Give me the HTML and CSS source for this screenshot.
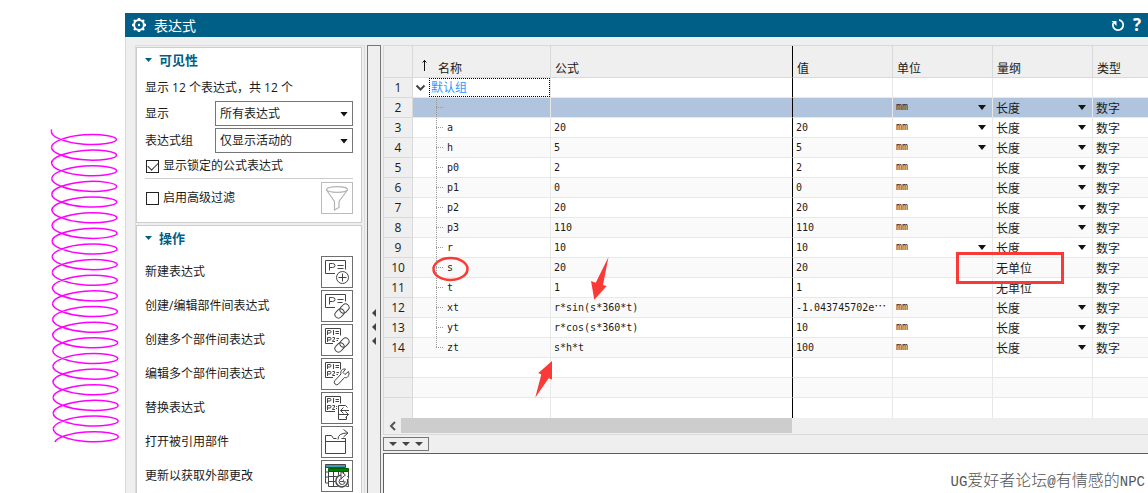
FILE: index.html
```html
<!DOCTYPE html>
<html lang="zh-CN">
<head>
<meta charset="utf-8">
<title>表达式</title>
<link rel="stylesheet" href="styles.css">
</head>
<body>
<div class="workspace">
  <div class="viewport">
    <svg class="helix" width="125" height="493" viewBox="0 0 125 493" aria-hidden="true">
      <defs>
        <path id="turn" d="M0 0c0 5.8 15.5 11.2 32.5 12.5c17 1.3 32.5-1.5 32.5-4.7c0-3.2-15.5-6-32.5-4.7c-17 1.3-32.4 6.7-32.4 12.54"/>
        <g id="turns">
          <use href="#turn"/>
          <use href="#turn" x="0.1" y="15.64"/>
          <use href="#turn" x="0.2" y="31.28"/>
          <use href="#turn" x="0.3" y="46.92"/>
          <use href="#turn" x="0.4" y="62.56"/>
        </g>
      </defs>
      <path d="M51.5 129.5l-.1 2.2"/>
      <use href="#turns" x="51.4" y="131.7"/>
      <use href="#turns" x="51.9" y="209.9"/>
      <use href="#turns" x="52.4" y="288.1"/>
      <use href="#turn" x="52.9" y="366.3"/>
      <use href="#turn" x="53" y="381.9"/>
      <use href="#turn" x="53.1" y="397.6"/>
      <use href="#turn" x="53.2" y="413.2"/>
      <path d="M53.3 428.9c0 5.8 15.5 11.2 32.5 12.5c17 1.3 32.5-1.5 32.5-4.7c0-3.2-15.5-6-32.5-4.7c-15 1.2-28.500 5-31 10"/>
    </svg>
  </div>

  <section class="dialog">
    <header class="titlebar">
      <svg class="gear" width="16" height="16" viewBox="0 0 16 16" aria-hidden="true">
        <circle cx="8" cy="8" r="4.900" fill="none" stroke="#fff" stroke-width="2"/>
        <circle cx="8" cy="8" r="1.200" fill="#fff"/>
        <path d="M8 1v2M8 13v2M1 8h2M13 8h2M3 3l1.500 1.500M11.500 11.500L13 13M3 13l1.500-1.500M11.500 4.500L13 3" stroke="#fff" stroke-width="2.400"/>
      </svg>
      <h1>表达式</h1>
      <button class="title-button" aria-label="重置">
        <svg width="14" height="14" viewBox="0 0 14 14"><path d="M8 1.800a5.200 5.200 0 1 1-5.800 3.200" fill="none" stroke="#fff" stroke-width="1.800"/><path d="M.5 3h5v5z" fill="#fff"/></svg>
      </button>
      <button class="title-button help" aria-label="帮助">?</button>
    </header>

    <div class="content">
      <aside class="sidebar">
        <section class="panel">
          <h2><span class="caret"></span>可见性</h2>
          <p class="status">显示 12 个表达式，共 12 个</p>
          <div class="field">
            <label for="show">显示</label>
            <span class="picker"><select id="show"><option>所有表达式</option></select></span>
          </div>
          <div class="field">
            <label for="group">表达式组</label>
            <span class="picker"><select id="group"><option>仅显示活动的</option></select></span>
          </div>
          <label class="check"><input type="checkbox" checked>显示锁定的公式表达式</label>
          <div class="filter-row">
            <label class="check"><input type="checkbox">启用高级过滤</label>
            <button class="tool disabled" aria-label="过滤器" disabled>
              <svg width="30" height="30" viewBox="0 0 30 30"><g fill="none" stroke="#b4b4b4" stroke-width="1.200"><ellipse cx="15" cy="6.500" rx="10.500" ry="2.800"/><path d="M4.500 7l8 11.500v8.500l4.500-2.500v-6l8.500-11.500"/></g></svg>
            </button>
          </div>
        </section>

        <section class="panel actions">
          <h2><span class="caret"></span>操作</h2>
          <div class="action"><label for="a1">新建表达式</label>
            <button class="tool" id="a1"><svg width="30" height="30" viewBox="0 0 30 30"><path d="M13 16.500H3.500v-13h20v9"/><path d="M7.500 13.500v-7h3q2.500 0 2.500 2t-2.500 2h-3M15.500 8.500h6M15.500 11.500h6"/><circle cx="20.500" cy="20.500" r="6"/><path d="M20.500 16.500v8M16.500 20.500h8"/></svg></button></div>
          <div class="action"><label for="a2">创建/编辑部件间表达式</label>
            <button class="tool" id="a2"><svg width="30" height="30" viewBox="0 0 30 30"><path d="M13 16.500H3.500v-13h20v7"/><path d="M7.500 13.500v-7h3q2.500 0 2.500 2t-2.500 2h-3M15.500 8.500h6M15.500 11.500h5"/><g transform="rotate(-45 20 20)"><rect x="11.500" y="16.500" width="10" height="7" rx="3.500"/><rect x="18.500" y="16.500" width="10" height="7" rx="3.500"/></g></svg></button></div>
          <div class="action"><label for="a3">创建多个部件间表达式</label>
            <button class="tool" id="a3"><svg width="30" height="30" viewBox="0 0 30 30"><path d="M11 18.500H3.500v-15h15v7"/><path d="M5.500 10V5.500h2.500q1 0 1 1.200T8 8H5.500M11.500 5v5M13.500 6.500h3.500M13.500 8.500h3.500M5.500 17v-4.500h2.500q1 0 1 1.200T8 15H5.500M10.500 12.500h2v1.500l-2 2v.5h2.500M14.500 13.500h2.500M14.500 15.500h1.500"/><g transform="rotate(-45 20 20)"><rect x="11.500" y="16.500" width="10" height="7" rx="3.500"/><rect x="18.500" y="16.500" width="10" height="7" rx="3.500"/></g></svg></button></div>
          <div class="action"><label for="a4">编辑多个部件间表达式</label>
            <button class="tool" id="a4"><svg width="30" height="30" viewBox="0 0 30 30"><path d="M11 18.500H3.500v-15h15v7"/><path d="M5.500 10V5.500h2.500q1 0 1 1.200T8 8H5.500M11.500 5v5M13.500 6.500h3.500M13.500 8.500h3.500M5.500 17v-4.500h2.500q1 0 1 1.200T8 15H5.500M10.500 12.500h2v1.500l-2 2v.5h2.500M14.500 13.500h2.500M14.500 15.500h1.500"/><path d="M26.500 12.500l-3.500 3-2-2 2.500-3.500c-3-.5-5.500 2-4.500 5l-6 6.500a2.200 2.200 0 0 0 3.500 3.500l6-6.500c3 1 5.500-2 4-6z" fill="#fff"/></svg></button></div>
          <div class="action"><label for="a5">替换表达式</label>
            <button class="tool" id="a5"><svg width="30" height="30" viewBox="0 0 30 30"><path d="M13 18.500H3.500v-15h15v7"/><path d="M5.500 10V5.500h2.500q1 0 1 1.200T8 8H5.500M11.500 5v5M13.500 6.500h3.500M13.500 8.500h3.500M5.500 17v-4.500h2.500q1 0 1 1.200T8 15H5.500M10.500 12.500h2v1.500l-2 2v.5h2.500M14 13.500h1M14 15.500h1"/><path d="M25.500 14.500l-2-2h-7v14h8v-3M27 17.500h-8.500M21.500 14.500l-3 3 3 3M16 21.500h10.500M23.500 18.500l3 3-3 3"/></svg></button></div>
          <div class="action"><label for="a6">打开被引用部件</label>
            <button class="tool" id="a6"><svg width="30" height="30" viewBox="0 0 30 30"><path d="M11.500 11.500l-2-3h-6v18h20v-13M3.500 14.500h20M11.500 11.500h3M16 12.500q0-6.500 9-6.500M21.500 2.500l4.500 3.500-4.500 4M19.500 11.500h4v3"/></svg></button></div>
          <div class="action"><label for="a7">更新以获取外部更改</label>
            <button class="tool" id="a7"><svg width="30" height="30" viewBox="0 0 30 30"><path d="M3.500 3.500h20v3h-20z" fill="#3d9db5"/><path d="M3.500 6v16h4M3.500 11h3M3.500 16h3"/><path d="M6.500 10.500h20v15h-20zM6.500 15.500h20M6.500 20.500h20M11.500 10v15M16.500 10v15M21.500 10v15" fill="#fff"/><path d="M6.500 7.500h20v3h-20z" fill="#008000" stroke="#006000"/><circle cx="20" cy="20" r="4.500" stroke="#fff" stroke-width="5"/><path d="M25.500 18a6 6 0 1 1-5-4" stroke-width="1.500"/><path d="M19 10.500l4.500 3.500-4.500 3.500z" fill="#fff"/><path d="M23 20a3 3 0 1 1-3-2.500"/></svg></button></div>
        </section>
      </aside>

      <button class="splitter" aria-label="折叠侧栏"><i></i><i></i><i></i></button>

      <main class="main">
        <div class="grid">
          <table>
            <colgroup><col class="c-num"><col class="c-name"><col class="c-formula"><col class="c-value"><col class="c-unit"><col class="c-dim"><col></colgroup>
            <thead>
              <tr><th></th><th class="name-head"><span class="head-name"><svg width="7" height="13" viewBox="0 0 7 13" aria-hidden="true"><path d="M3.500 1v11M1.500 3.500l2-2 2 2" fill="none" stroke="#111"/></svg>名称</span></th><th>公式</th><th>值</th><th>单位</th><th>量纲</th><th>类型</th></tr>
            </thead>
            <tbody>
              <tr><th>1</th><td><div class="root"><svg width="11" height="8" viewBox="0 0 11 8" aria-hidden="true"><path d="M1.500 1.500l4 4 4-4" fill="none" stroke="#444" stroke-width="2"/></svg><span class="root-name">默认组</span></div></td><td></td><td></td><td></td><td></td><td></td></tr>
              <tr class="selected"><th>2</th><td><div class="node"></div></td><td></td><td></td><td><span class="drop"><select class="unit" aria-label="单位"><option>mm</option></select></span></td><td><span class="drop"><select aria-label="量纲"><option>长度</option></select></span></td><td>数字</td></tr>
              <tr><th>3</th><td><div class="node mono">a</div></td><td class="mono">20</td><td class="mono">20</td><td><span class="drop"><select class="unit" aria-label="单位"><option>mm</option></select></span></td><td><span class="drop"><select aria-label="量纲"><option>长度</option></select></span></td><td>数字</td></tr>
              <tr><th>4</th><td><div class="node mono">h</div></td><td class="mono">5</td><td class="mono">5</td><td><span class="drop"><select class="unit" aria-label="单位"><option>mm</option></select></span></td><td><span class="drop"><select aria-label="量纲"><option>长度</option></select></span></td><td>数字</td></tr>
              <tr><th>5</th><td><div class="node mono">p0</div></td><td class="mono">2</td><td class="mono">2</td><td class="unit">mm</td><td><span class="drop"><select aria-label="量纲"><option>长度</option></select></span></td><td>数字</td></tr>
              <tr><th>6</th><td><div class="node mono">p1</div></td><td class="mono">0</td><td class="mono">0</td><td class="unit">mm</td><td><span class="drop"><select aria-label="量纲"><option>长度</option></select></span></td><td>数字</td></tr>
              <tr><th>7</th><td><div class="node mono">p2</div></td><td class="mono">20</td><td class="mono">20</td><td class="unit">mm</td><td><span class="drop"><select aria-label="量纲"><option>长度</option></select></span></td><td>数字</td></tr>
              <tr><th>8</th><td><div class="node mono">p3</div></td><td class="mono">110</td><td class="mono">110</td><td class="unit">mm</td><td><span class="drop"><select aria-label="量纲"><option>长度</option></select></span></td><td>数字</td></tr>
              <tr><th>9</th><td><div class="node mono">r</div></td><td class="mono">10</td><td class="mono">10</td><td><span class="drop"><select class="unit" aria-label="单位"><option>mm</option></select></span></td><td><span class="drop"><select aria-label="量纲"><option>长度</option></select></span></td><td>数字</td></tr>
              <tr><th>10</th><td><div class="node mono">s</div></td><td class="mono">20</td><td class="mono">20</td><td></td><td>无单位</td><td>数字</td></tr>
              <tr><th>11</th><td><div class="node mono">t</div></td><td class="mono">1</td><td class="mono">1</td><td></td><td>无单位</td><td>数字</td></tr>
              <tr><th>12</th><td><div class="node mono">xt</div></td><td class="mono">r*sin(s*360*t)</td><td class="mono">-1.043745702e<span class="cjk">…</span></td><td class="unit">mm</td><td><span class="drop"><select aria-label="量纲"><option>长度</option></select></span></td><td>数字</td></tr>
              <tr><th>13</th><td><div class="node mono">yt</div></td><td class="mono">r*cos(s*360*t)</td><td class="mono">10</td><td class="unit">mm</td><td><span class="drop"><select aria-label="量纲"><option>长度</option></select></span></td><td>数字</td></tr>
              <tr><th>14</th><td><div class="node last mono">zt</div></td><td class="mono">s*h*t</td><td class="mono">100</td><td class="unit">mm</td><td><span class="drop"><select aria-label="量纲"><option>长度</option></select></span></td><td>数字</td></tr>
              <tr><th></th><td></td><td></td><td></td><td></td><td></td><td></td></tr>
              <tr><th></th><td></td><td></td><td></td><td></td><td></td><td></td></tr>
              <tr class="tail"><th></th><td></td><td></td><td></td><td></td><td></td><td></td></tr>
            </tbody>
          </table>
          <div class="scrollbar">
            <button aria-label="向左滚动"><svg width="8" height="10" viewBox="0 0 8 10"><path d="M6 1L2 5l4 4" fill="none" stroke="#555" stroke-width="2"/></svg></button>
            <div class="thumb"></div>
          </div>
        </div>
        <button class="expander" aria-label="展开编辑区"><i></i><i></i><i></i></button>
        <div class="editor">
          <textarea aria-label="公式编辑"></textarea>
          <div class="credit"><span class="latin">UG</span>爱好者论坛<span class="latin">@</span>有情感的<span class="latin">NPC</span></div>
        </div>
      </main>
    </div>
  </section>

  <svg class="markup" width="1148" height="493" viewBox="0 0 1148 493" aria-hidden="true">
    <g fill="none" stroke="#f93a37"><ellipse cx="450.500" cy="269" rx="17" ry="11" stroke-width="2.500"/><rect x="957.500" y="253.500" width="105" height="29" stroke-width="3"/></g>
    <g fill="#f93a37"><path d="M608.500 257L603 285l3.700 1L594.300 299.700 591 281l4.700 1.700z"/><path d="M535.300 397.500L541.300 374.500l-3-1.500L552 361v18.500l-3.300-1.200z"/></g>
  </svg>
</div>
</body>
</html>
```

FILE: styles.css
```css
* { box-sizing: border-box; }

body {
  margin: 0;
  background: #fff;
  color: #1a1a1a;
  font: 12px/20px "Noto Sans CJK SC", sans-serif;
}

button, select, textarea, input { font: inherit; color: inherit; margin: 0; }
button { padding: 0; border: 0; background: none; }
svg { display: block; }

.workspace {
  position: relative;
  display: flex;
  height: 100vh;
  overflow: hidden;
}

.viewport { flex: none; width: 125px; }
.helix { fill: none; stroke: #f0f; stroke-width: 1.5; }

.dialog {
  flex: 1;
  min-width: 0;
  display: flex;
  flex-direction: column;
  margin-top: 13px;
  background: #efefef;
}

.titlebar {
  flex: none;
  display: flex;
  align-items: center;
  height: 24px;
  padding: 0 4px 0 6px;
  background: #005f87;
  color: #fff;
}
.titlebar h1 {
  flex: 1;
  margin: 0 0 0 7px;
  font-size: 14px;
  font-weight: 400;
}
.title-button { width: 14px; margin-left: 5px; }
.help { font: bold 17px/24px "Open Sans", sans-serif; }

.content {
  flex: 1;
  min-height: 0;
  display: flex;
  padding: 8px 0 0 9px;
  border-left: 1px solid #d9d9d9;
}

/* Sidebar */
.sidebar {
  flex: none;
  display: flex;
  flex-direction: column;
  gap: 2px;
  width: 230px;
  margin-right: 2px;
  padding: 1px 2px 0 0;
  border: 1px solid #dcdcdc;
  border-bottom: 0;
  font-family: "Open Sans", "Noto Sans CJK SC", sans-serif;
  overflow: hidden;
}
.panel {
  flex: none;
  padding: 0 8px;
  border: 1px solid #cdcdcd;
  background: #fff;
}
.actions { flex: 1 0 auto; }
.panel h2 {
  display: flex;
  align-items: center;
  height: 24px;
  margin: 0 0 6px;
  color: #005f87;
  font-size: 13px;
  font-weight: 700;
}
.caret {
  width: 7px;
  height: 4px;
  margin-right: 7px;
  background: #005f87;
  clip-path: polygon(0 0, 100% 0, 50% 100%);
}
.status { margin: 0 0 3px; }
.field {
  display: flex;
  align-items: center;
  justify-content: space-between;
  margin-bottom: 2px;
}
.picker, .drop { position: relative; display: block; }
.picker { width: 138px; }
.picker select {
  display: block;
  width: 100%;
  height: 25px;
  padding: 0 4px;
  border: 1px solid #767676;
  border-radius: 0;
  background: #fff;
  appearance: none;
}
.picker::after, .drop::after {
  content: "";
  position: absolute;
  top: 50%;
  right: 5px;
  width: 8px;
  height: 5px;
  margin-top: -2px;
  background: #111;
  clip-path: polygon(0 0, 100% 0, 50% 100%);
  pointer-events: none;
}
.check {
  display: flex;
  align-items: center;
  gap: 4px;
  height: 22px;
}
.check input {
  width: 13px;
  height: 13px;
  margin-left: 1px;
  border: 1px solid #222;
  background: #fff;
  appearance: none;
}
.check input:checked::before {
  content: "";
  display: block;
  width: 9px;
  height: 5px;
  margin: 1px;
  border: solid #333;
  border-width: 0 0 1px 1px;
  transform: rotate(-45deg);
}
.filter-row {
  display: flex;
  align-items: center;
  justify-content: space-between;
  padding: 3px 0 8px;
  border-top: 1px solid #ccc;
}
.panel > .check { margin-bottom: 1px; }
.tool {
  width: 32px;
  height: 32px;
  border: 1px solid #6e6e6e;
  background: #fff;
}
.tool svg { fill: none; stroke: #444; stroke-width: 1; }
.tool.disabled { border-color: #bbb; }
.action {
  display: flex;
  align-items: center;
  justify-content: space-between;
  margin-bottom: 2px;
}

/* Splitter */
.splitter {
  flex: none;
  display: flex;
  flex-direction: column;
  align-items: center;
  gap: 6px;
  width: 14px;
  margin-right: 2px;
  padding-top: 263px;
  border: 1px solid #767676;
  border-bottom: 0;
  overflow: hidden;
}
.splitter i {
  flex: none;
  width: 4px;
  height: 8px;
  background: #444;
  clip-path: polygon(100% 0, 100% 100%, 0 50%);
}

/* Table */
.main {
  flex: 1;
  min-width: 0;
  display: flex;
  flex-direction: column;
}
.grid {
  flex: none;
  border: 1px solid #d9d9d9;
  border-right: 0;
}
table {
  width: 100%;
  table-layout: fixed;
  border-collapse: separate;
  border-spacing: 0;
  background: #fff;
}
.c-num { width: 29px; }
.c-name { width: 138px; }
.c-formula { width: 242px; }
.c-value, .c-unit, .c-dim { width: 100px; }
th, td {
  height: 20px;
  padding: 0 3px 1px;
  border: solid #e8e8e8;
  border-width: 0 1px 1px 0;
  line-height: 17px;
  text-align: left;
  font-weight: 400;
  white-space: nowrap;
  overflow: hidden;
}
th { background: #efefef; border-color: #d9d9d9; }
thead th {
  height: 32px;
  padding: 11px 4px 0;
}
tbody th {
  padding: 0;
  font-family: "Open Sans", sans-serif;
  text-align: center;
}
tbody tr:nth-child(even) td { background: #fafafa; }
tbody tr.selected td { background: #b0c4de; }
th:nth-child(3), td:nth-child(3) { border-right-color: #000; }
th:last-child, td:last-child { border-right: 0; }
.tail th, .tail td { border-bottom: 0; }
td:nth-child(2) { padding: 0; }

.mono {
  font-family: "DejaVu Sans Mono", monospace;
  font-size: 10px;
}
.unit {
  font-family: "Liberation Mono", monospace;
  font-size: 10px;
}
td.mono, td.unit { padding-bottom: 0; }
.cjk { font: 12px/12px "Noto Sans CJK SC", sans-serif; }
.head-name { display: flex; align-items: center; gap: 10px; }
thead .name-head { padding-left: 8px; }
.head-name svg { margin-bottom: 4px; }

.root { display: flex; align-items: center; }
.root svg { margin: 0 3px 0 2px; }
.root-name {
  flex: 1;
  height: 19px;
  padding-left: 1px;
  border: 1px dotted #000;
  color: #39f;
  line-height: 16px;
}

.node {
  height: 20px;
  margin: 0 0 -1px 23px;
  padding-left: 11px;
  line-height: 19px;
  background:
    repeating-linear-gradient(to right, #999 0 1px, transparent 1px 2px) 0 9px / 8px 1px no-repeat,
    repeating-linear-gradient(to bottom, #999 0 1px, transparent 1px 2px) 0 0 / 1px 100% no-repeat;
}
.node.last { background-size: 8px 1px, 1px 10px; }

.drop select {
  display: block;
  width: 100%;
  height: 18px;
  padding: 0;
  border: 0;
  background: transparent;
  appearance: none;
}
.drop select.unit {
  font-family: "Liberation Mono", monospace;
  font-size: 10px;
}
.drop::after { right: 3px; }

.scrollbar {
  display: flex;
  height: 16px;
  padding-bottom: 1px;
}
.scrollbar button {
  flex: none;
  display: flex;
  align-items: center;
  justify-content: center;
  width: 17px;
}
.thumb { width: 391px; background: #cdcdcd; }

.expander {
  flex: none;
  display: flex;
  align-items: center;
  justify-content: space-evenly;
  width: 46px;
  height: 14px;
  margin: 2px 0;
  border: 1px solid #767676;
}
.expander i {
  width: 8px;
  height: 4px;
  background: #444;
  clip-path: polygon(0 0, 100% 0, 50% 100%);
}

.editor {
  position: relative;
  flex: 1;
  min-height: 0;
}
.editor textarea {
  display: block;
  width: 100%;
  height: 100%;
  padding: 4px;
  border: solid #5f5f5f;
  border-width: 1px 0 0 1px;
  background: #fff;
  resize: none;
}
.credit {
  position: absolute;
  right: 3px;
  bottom: 0;
  color: #555;
  font-size: 16px;
  line-height: 22px;
  font-weight: 300;
}
.latin { font-family: "Liberation Mono", monospace; font-size: 14px; }

.markup {
  position: absolute;
  top: 0;
  left: 0;
  pointer-events: none;
}
```
